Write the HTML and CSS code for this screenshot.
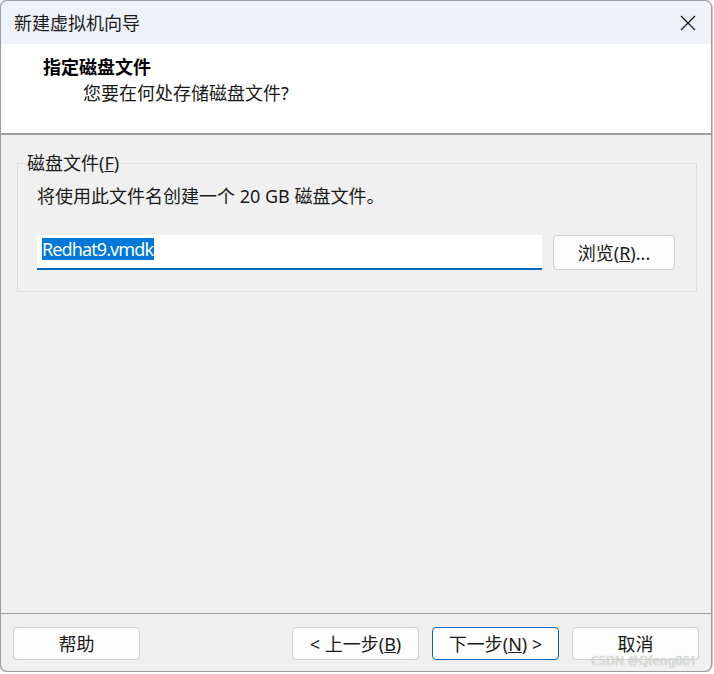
FILE: index.html
```html
<!DOCTYPE html>
<html lang="zh-CN">
<head>
<meta charset="utf-8">
<title>新建虚拟机向导</title>
<link rel="stylesheet" href="styles.css">
</head>
<body>
<div class="window">
  <div class="titlebar">
    <span class="title">新建虚拟机向导</span>
    <svg class="close" width="16" height="16" viewBox="0 0 16 16"><path d="M1 1 L15 15 M15 1 L1 15" stroke="#1a1a1a" stroke-width="1.3" fill="none"/></svg>
  </div>
  <div class="header">
    <div class="h-title">指定磁盘文件</div>
    <div class="h-sub">您要在何处存储磁盘文件?</div>
  </div>
  <div class="content">
    <fieldset class="group">
      <legend class="legend">磁盘文件(<u>F</u>)</legend>
      <div class="desc">将使用此文件名创建一个 20 GB 磁盘文件。</div>
      <div class="row">
        <div class="field"><span class="sel">Redhat9.vmdk</span></div>
        <div class="btn browse">浏览(<u>R</u>)...</div>
      </div>
    </fieldset>
  </div>
  <div class="footer">
    <div class="btn">帮助</div>
    <div class="nav">
      <div class="btn">&lt; 上一步(<u>B</u>)</div>
      <div class="btn default">下一步(<u>N</u>) &gt;</div>
      <div class="btn">取消</div>
    </div>
  </div>
  <div class="watermark">CSDN @Qfeng001</div>
</div>
</body>
</html>
```

FILE: styles.css
```css
html, body {
  margin: 0;
  background: #ffffff;
}
body {
  font-family: "Noto Sans", "Noto Sans CJK SC", sans-serif;
  color: #1a1a1a;
}
.window {
  position: relative;
  width: 712px;
  height: 672px;
  box-sizing: border-box;
  border: 1px solid #9b9b9b;
  border-radius: 8px;
  box-shadow: 0 0 0 1px #c6c6c6;
  overflow: hidden;
  display: flex;
  flex-direction: column;
  background: #f0f0f0;
}
.titlebar {
  height: 43px;
  flex: none;
  background: #eef2f8;
  display: flex;
  align-items: center;
  justify-content: space-between;
  padding: 0 15px 0 13px;
  font-size: 18px;
}
.title {
  line-height: 24px;
}
.close {
  display: block;
}
.header {
  height: 91px;
  flex: none;
  box-sizing: border-box;
  background: #ffffff;
  border-bottom: 2px solid #a0a0a0;
  padding-top: 10px;
  font-size: 18px;
  line-height: 26px;
}
.h-title {
  font-weight: bold;
  padding-left: 42px;
  color: #000;
}
.h-sub {
  padding-left: 82px;
}
.content {
  flex: 1;
  padding: 16px 14px 0 16px;
}
.group {
  margin: 0;
  border: 1px solid #dcdcdc;
  padding: 9px 20px 21px 19px;
  font-size: 18px;
}
.legend {
  margin-left: -11px;
  padding: 0 1px;
  line-height: 24px;
}
.desc {
  line-height: 24px;
}
.desc, .legend, .browse {
  letter-spacing: 0;
}
.row {
  display: flex;
  gap: 11px;
  margin-top: 27px;
}
.field {
  width: 505px;
  height: 35px;
  box-sizing: border-box;
  background: #ffffff;
  border-bottom: 2px solid #0067c0;
  padding: 2px 0 0 5px;
}
.sel {
  display: inline-block;
  background: #0078d7;
  color: #ffffff;
  font-size: 18px;
  line-height: 22px;
  letter-spacing: -0.9px;
  padding-right: 1px;
}
.btn {
  width: 127px;
  height: 33px;
  box-sizing: border-box;
  border: 1px solid #d0d0d0;
  border-radius: 4px;
  background: #fdfdfd;
  display: flex;
  align-items: center;
  justify-content: center;
  font-size: 18px;
  line-height: 20px;
  white-space: pre;
}
.browse {
  width: 122px;
  height: 35px;
}
.default {
  border-color: #0067c0;
}
.footer {
  flex: none;
  display: flex;
  justify-content: space-between;
  border-top: 1px solid #a0a0a0;
  padding: 13px 12px 11px 12px;
}
.nav {
  display: flex;
  gap: 13px;
}
.watermark {
  position: absolute;
  right: 14px;
  bottom: 4px;
  font-size: 12px;
  line-height: 12px;
  color: #e2e2e2;
  text-shadow: 0 0 1px #9a9a9a;
  letter-spacing: 0.3px;
}
```
